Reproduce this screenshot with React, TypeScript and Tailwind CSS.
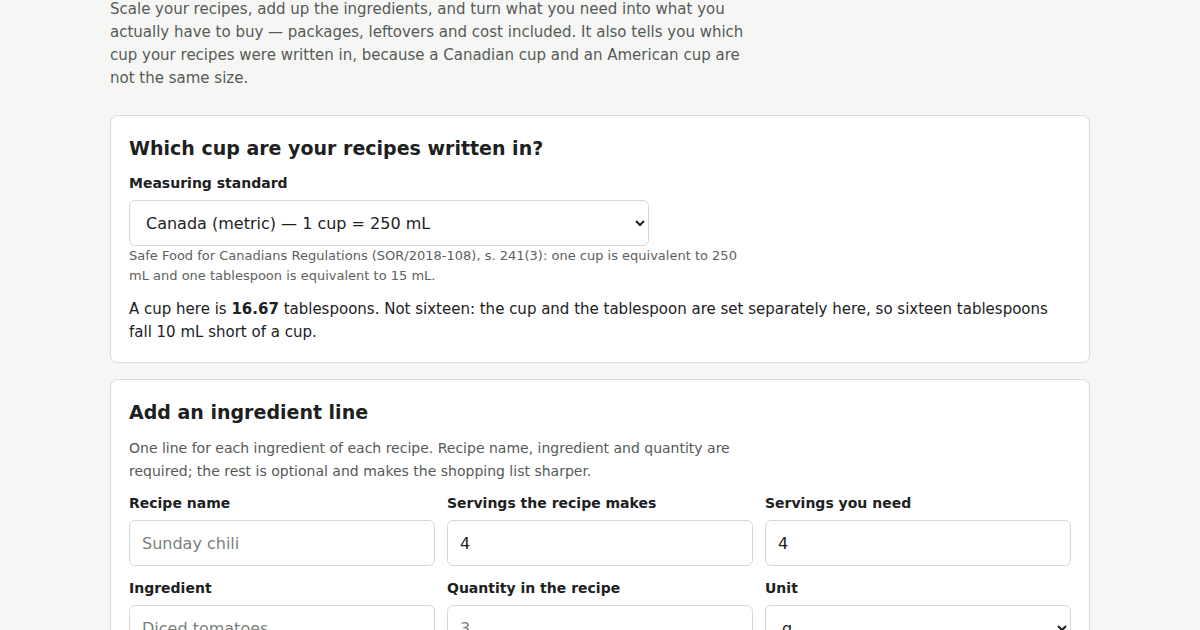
import React from "react";

const font = { fontFamily: '"DejaVu Sans", sans-serif' };

function Field({ label, children }: { label: string; children: React.ReactNode }) {
  return (
    <label className="flex flex-col">
      <span className="text-[14px] leading-[20px] font-bold text-[#1c211e] mb-[7px]">{label}</span>
      {children}
    </label>
  );
}

const inputCls =
  "h-[46px] w-full rounded-[6px] border border-[#d6dad6] bg-white px-3 text-[16px] text-[#1c211e] placeholder:text-[#7a7f7c] outline-none";

export default function App() {
  return (
    <div className="min-h-[630px] bg-[#f6f7f5] text-[#1c211e]" style={font}>
      <div className="mx-auto w-[980px] pb-10">
        <p className="-mt-[2px] max-w-[640px] text-[15px] leading-[23px] text-[#555a57]">
          Scale your recipes, add up the ingredients, and turn what you need into what you actually have to buy —
          packages, leftovers and cost included. It also tells you which cup your recipes were written in, because a
          Canadian cup and an American cup are not the same size.
        </p>

        <section className="mt-[25px] rounded-[8px] border border-[#d8dcd8] bg-white p-[18px]">
          <h2 className="text-[19px] leading-[29px] font-bold text-[#1c211e] mb-[10px]">
            Which cup are your recipes written in?
          </h2>
          <div className="flex flex-col">
            <span className="text-[14px] leading-[20px] font-bold mb-[7px]">Measuring standard</span>
            <select className="h-[46px] w-[520px] rounded-[6px] border border-[#d6dad6] bg-white px-3 text-[16px] text-[#1c211e] outline-none">
              <option>Canada (metric) — 1 cup = 250 mL</option>
              <option>United States — 1 cup = 236.6 mL</option>
            </select>
          </div>
          <p className="max-w-[620px] text-[13px] leading-[20px] text-[#5c615e]">
            Safe Food for Canadians Regulations (SOR/2018-108), s. 241(3): one cup is equivalent to 250 mL and one
            tablespoon is equivalent to 15 mL.
          </p>
          <p className="mt-[12px] text-[15px] leading-[23px] text-[#1c211e]">
            A cup here is <strong>16.67</strong> tablespoons. Not sixteen: the cup and the tablespoon are set
            separately here, so sixteen tablespoons fall 10 mL short of a cup.
          </p>
        </section>

        <section className="mt-[16px] rounded-[8px] border border-[#d8dcd8] bg-white p-[18px]">
          <h2 className="text-[19px] leading-[29px] font-bold text-[#1c211e] mb-[10px]">Add an ingredient line</h2>
          <p className="max-w-[640px] text-[14px] leading-[23px] text-[#555a57]">
            One line for each ingredient of each recipe. Recipe name, ingredient and quantity are required; the rest is
            optional and makes the shopping list sharper.
          </p>
          <div className="mt-[10px] grid grid-cols-3 gap-x-[12px] gap-y-[12px]">
            <Field label="Recipe name">
              <input className={inputCls} placeholder="Sunday chili" />
            </Field>
            <Field label="Servings the recipe makes">
              <input className={inputCls} defaultValue="4" />
            </Field>
            <Field label="Servings you need">
              <input className={inputCls} defaultValue="4" />
            </Field>
            <Field label="Ingredient">
              <input className={inputCls} placeholder="Diced tomatoes" />
            </Field>
            <Field label="Quantity in the recipe">
              <input className={inputCls} placeholder="3" />
            </Field>
            <Field label="Unit">
              <select className={inputCls} defaultValue="g">
                <option value="g">g</option>
                <option value="kg">kg</option>
                <option value="mL">mL</option>
              </select>
            </Field>
          </div>
        </section>
      </div>
    </div>
  );
}
